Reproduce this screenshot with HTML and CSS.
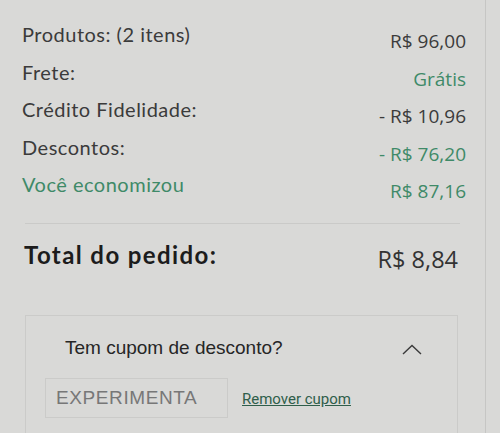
FILE: index.html
```html
<!DOCTYPE html>
<html lang="pt-BR">
<head>
    <meta charset="UTF-8">
    <meta name="viewport" content="width=device-width, initial-scale=1.0">
    <title>Resumo do pedido</title>
    <link rel="stylesheet" href="styles.css">
</head>
<body>
    <div class="summary">
        <div class="rows">
            <div class="row">
                <span class="label">Produtos: (2 itens)</span>
                <span class="value">R$ 96,00</span>
            </div>
            <div class="row">
                <span class="label">Frete:</span>
                <span class="value green">Grátis</span>
            </div>
            <div class="row">
                <span class="label">Crédito Fidelidade:</span>
                <span class="value">- R$ 10,96</span>
            </div>
            <div class="row">
                <span class="label">Descontos:</span>
                <span class="value green">- R$ 76,20</span>
            </div>
            <div class="row">
                <span class="label green">Você economizou</span>
                <span class="value green">R$ 87,16</span>
            </div>
        </div>

        <hr class="divider">

        <div class="total">
            <span class="total-label">Total do pedido:</span>
            <span class="total-value">R$ 8,84</span>
        </div>

        <div class="coupon">
            <div class="coupon-head">
                <span>Tem cupom de desconto?</span>
                <svg class="chevron" width="20" height="11" viewBox="0 0 20 11">
                    <polyline points="1,10 10,1.5 19,10" fill="none" stroke="#3a3a3a" stroke-width="1.4"/>
                </svg>
            </div>
            <div class="coupon-form">
                <input class="coupon-input" type="text" value="EXPERIMENTA" readonly>
                <a class="remove-link" href="#">Remover cupom</a>
            </div>
        </div>
    </div>
</body>
</html>
```

FILE: styles.css
```css
body {
    margin: 0;
    padding: 0;
    background: #d9d9d7;
    font-family: Lato, "Open Sans", sans-serif;
    color: #3b3b3b;
    overflow: hidden;
}
.summary {
    width: 486px;
    min-height: 100vh;
    box-sizing: border-box;
    padding: 22px 19px 0 22px;
    border-right: 1px solid #c6c6c4;
}
.row {
    display: flex;
    justify-content: space-between;
    align-items: flex-start;
    height: 37.5px;
}
.label {
    font-size: 20px;
    letter-spacing: 0.5px;
    line-height: 24px;
}
.value {
    font-family: "Open Sans", sans-serif;
    font-size: 19px;
    line-height: 24px;
    padding-top: 7px;
}
.green {
    color: #3f8a68;
}
.divider {
    border: none;
    border-top: 1px solid #cacac8;
    margin: 13px 6px 0 3px;
}
.total {
    display: flex;
    justify-content: space-between;
    align-items: flex-start;
    margin: 17px 8px 0 2px;
}
.total-label {
    font-size: 24px;
    font-weight: bold;
    letter-spacing: 1.4px;
    line-height: 28px;
    color: #1c1c1c;
}
.total-value {
    font-family: "Open Sans", sans-serif;
    font-size: 23.5px;
    line-height: 28px;
    padding-top: 4px;
    color: #333;
}
.coupon {
    margin: 42px 8px 0 3px;
    border: 1px solid #cbcbc9;
    padding: 20px 0 30px 0;
}
.coupon-head {
    display: flex;
    justify-content: space-between;
    align-items: center;
    padding: 0 35px 0 39px;
    font-family: "Liberation Sans", Arial, sans-serif;
    font-size: 19px;
    line-height: 24px;
    color: #262626;
}
.chevron {
    margin-top: 4px;
}
.coupon-form {
    display: flex;
    align-items: center;
    gap: 14px;
    margin-top: 18px;
    padding-left: 19px;
}
.coupon-input {
    width: 183px;
    height: 40px;
    box-sizing: border-box;
    border: 1px solid #cbcbc9;
    background: #d9d9d7;
    padding: 0 10px;
    font-family: "Liberation Sans", Arial, sans-serif;
    font-size: 19px;
    letter-spacing: 0.6px;
    color: #777;
    outline: none;
}
.remove-link {
    font-family: Roboto, sans-serif;
    font-size: 15px;
    color: #2f5e4a;
    text-decoration: underline;
    margin-top: 3px;
}
```
